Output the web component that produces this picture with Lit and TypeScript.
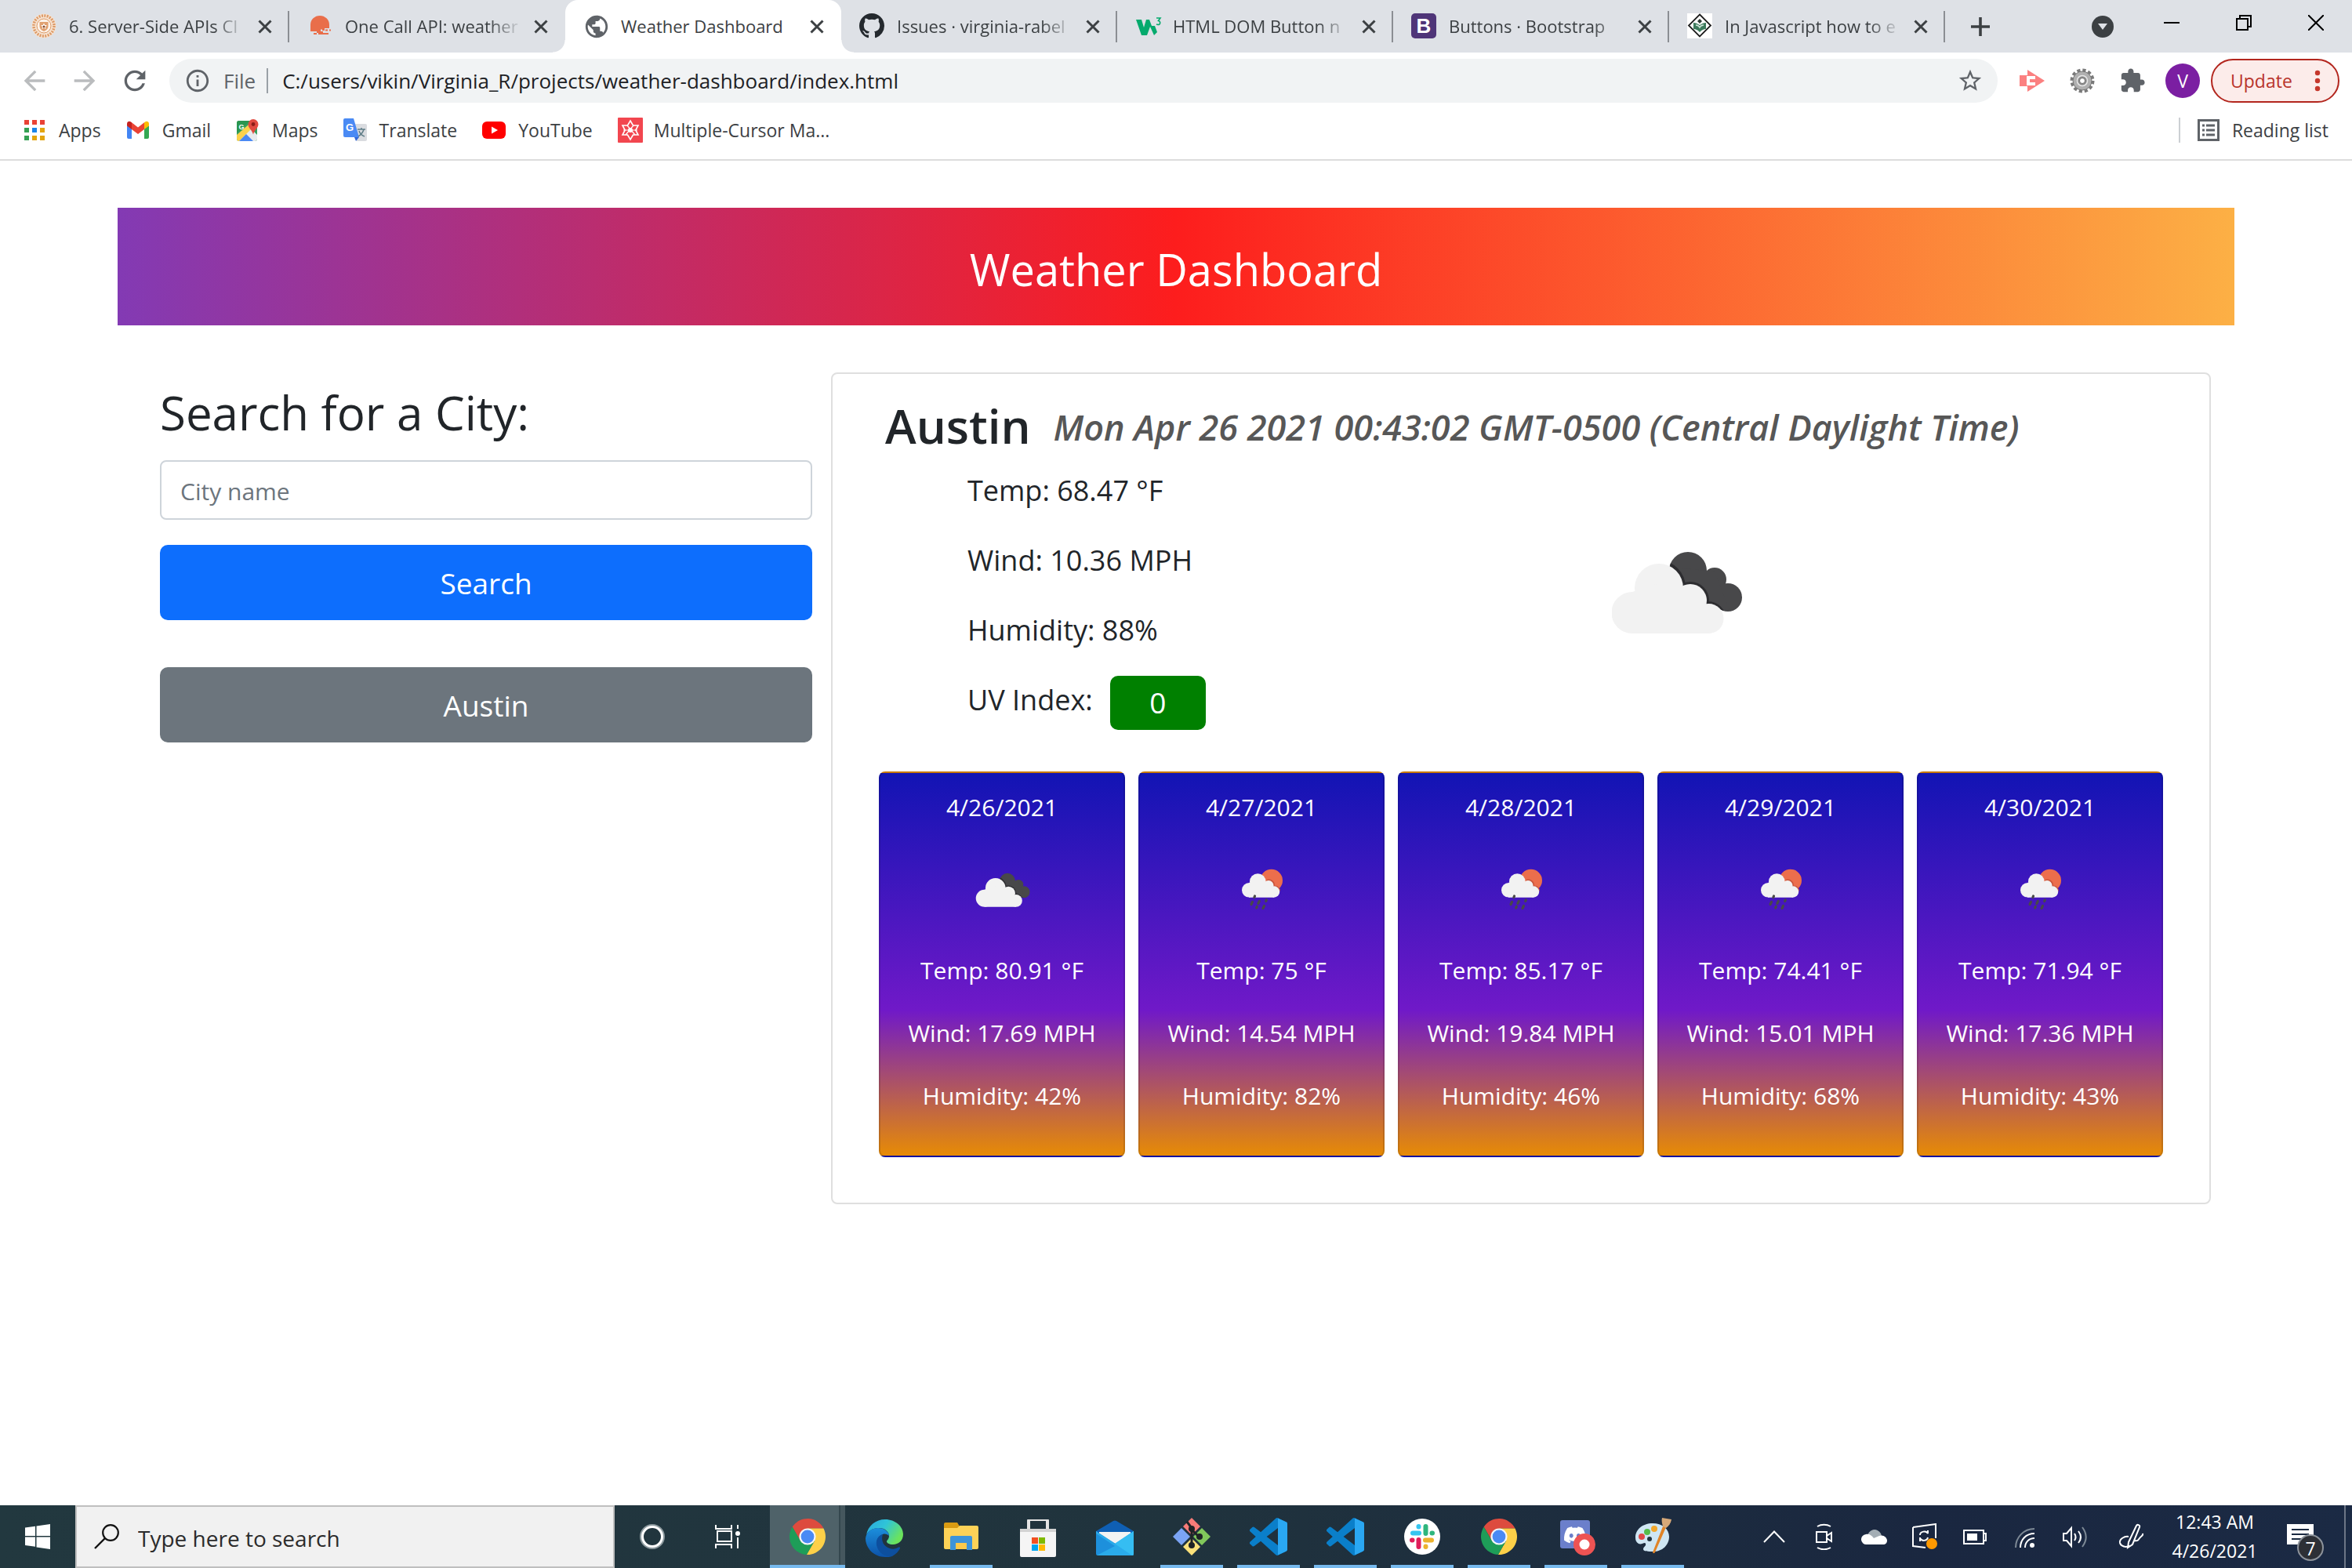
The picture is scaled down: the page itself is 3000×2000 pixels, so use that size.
import { LitElement, html, css, svg, nothing } from "lit";
import { customElement, state } from "lit/decorators.js";
import { classMap } from "lit/directives/class-map.js";

const icon = (w: number, h: number, box: string, body: unknown) =>
  html`<svg width=${w} height=${h} viewBox=${box} aria-hidden="true">${body}</svg>`;

const glyph = (d: string, size: number, fill = "#5f6368") =>
  icon(size, size, "0 0 24 24", svg`<path d=${d} fill=${fill}></path>`);

const GLOBE =
  "M12 2C6.48 2 2 6.48 2 12s4.48 10 10 10 10-4.48 10-10S17.52 2 12 2zm-1 17.93c-3.95-.49-7-3.85-7-7.93 0-.62.08-1.21.21-1.79L9 15v1c0 1.1.9 2 2 2v1.93zm6.9-2.54c-.26-.81-1-1.39-1.9-1.39h-1v-3c0-.55-.45-1-1-1H8v-2h2c.55 0 1-.45 1-1V7h2c1.1 0 2-.9 2-2v-.41c2.93 1.19 5 4.06 5 7.41 0 2.08-.8 3.97-2.1 5.39z";
const BACK = "M20 11H7.83l5.59-5.59L12 4l-8 8 8 8 1.41-1.41L7.83 13H20v-2z";
const FORWARD = "M4 13h12.17l-5.59 5.59L12 20l8-8-8-8-1.41 1.41L16.17 11H4v2z";
const RELOAD =
  "M17.65 6.35C16.2 4.9 14.21 4 12 4c-4.42 0-7.99 3.58-7.99 8s3.57 8 7.99 8c3.73 0 6.84-2.55 7.73-6h-2.08c-.82 2.33-3.04 4-5.65 4-3.31 0-6-2.69-6-6s2.69-6 6-6c1.66 0 3.14.69 4.22 1.78L13 11h7V4l-2.35 2.35z";
const INFO =
  "M11 7h2v2h-2zm0 4h2v6h-2zm1-9C6.48 2 2 6.48 2 12s4.48 10 10 10 10-4.48 10-10S17.52 2 12 2zm0 18c-4.41 0-8-3.59-8-8s3.59-8 8-8 8 3.59 8 8-3.59 8-8 8z";
const STAR =
  "M22 9.24l-7.19-.62L12 2 9.19 8.63 2 9.24l5.46 4.73L5.82 21 12 17.27 18.18 21l-1.63-7.03L22 9.24zM12 15.4l-3.76 2.27 1-4.28-3.32-2.88 4.38-.38L12 6.1l1.71 4.04 4.38.38-3.32 2.88 1 4.28L12 15.4z";
const PUZZLE =
  "M20.5 11H19V7c0-1.1-.9-2-2-2h-4V3.5C13 2.12 11.88 1 10.5 1S8 2.12 8 3.5V5H4c-1.1 0-1.99.9-1.99 2v3.8H3.5c1.49 0 2.7 1.21 2.7 2.7s-1.21 2.7-2.7 2.7H2V20c0 1.1.9 2 2 2h3.8v-1.5c0-1.49 1.21-2.7 2.7-2.7 1.49 0 2.7 1.21 2.7 2.7V22H17c1.1 0 2-.9 2-2v-4h1.5c1.38 0 2.5-1.12 2.5-2.5S21.88 11 20.5 11z";
const OCTOCAT =
  "M8 0C3.58 0 0 3.58 0 8c0 3.54 2.29 6.53 5.47 7.59.4.07.55-.17.55-.38 0-.19-.01-.82-.01-1.49-2.01.37-2.53-.49-2.69-.94-.09-.23-.48-.94-.82-1.13-.28-.15-.68-.52-.01-.53.63-.01 1.08.58 1.23.82.72 1.21 1.87.87 2.33.66.07-.52.28-.87.51-1.07-1.78-.2-3.64-.89-3.64-3.95 0-.87.31-1.59.82-2.15-.08-.2-.36-1.02.08-2.12 0 0 .67-.21 2.2.82.64-.18 1.32-.27 2-.27s1.36.09 2 .27c1.53-1.04 2.2-.82 2.2-.82.44 1.1.16 1.92.08 2.12.51.56.82 1.27.82 2.15 0 3.07-1.87 3.75-3.65 3.95.29.25.54.73.54 1.48 0 1.07-.01 1.93-.01 2.2 0 .21.15.46.55.38A8.01 8.01 0 0 0 16 8c0-4.42-3.58-8-8-8z";
const DISCORD =
  "M20.317 4.37a19.79 19.79 0 0 0-4.885-1.515.074.074 0 0 0-.079.037c-.21.375-.444.864-.608 1.25a18.27 18.27 0 0 0-5.487 0 12.64 12.64 0 0 0-.617-1.25.077.077 0 0 0-.079-.037A19.74 19.74 0 0 0 3.677 4.37a.07.07 0 0 0-.032.027C.533 9.046-.32 13.58.099 18.057a.082.082 0 0 0 .031.057 19.9 19.9 0 0 0 5.993 3.03.078.078 0 0 0 .084-.028c.462-.63.874-1.295 1.226-1.994a.076.076 0 0 0-.041-.106 13.1 13.1 0 0 1-1.872-.892.077.077 0 0 1-.008-.128c.126-.094.252-.192.372-.291a.074.074 0 0 1 .077-.01c3.928 1.793 8.18 1.793 12.062 0a.074.074 0 0 1 .078.009c.12.099.246.198.373.292a.077.077 0 0 1-.006.127 12.3 12.3 0 0 1-1.873.892.077.077 0 0 0-.041.107c.36.698.772 1.362 1.225 1.993a.076.076 0 0 0 .084.028 19.84 19.84 0 0 0 6.002-3.03.077.077 0 0 0 .032-.054c.5-5.177-.838-9.674-3.549-13.66a.06.06 0 0 0-.031-.028zM8.02 15.33c-1.183 0-2.157-1.085-2.157-2.419s.956-2.419 2.157-2.419c1.21 0 2.176 1.096 2.157 2.42 0 1.333-.956 2.418-2.157 2.418zm7.975 0c-1.183 0-2.157-1.085-2.157-2.419s.955-2.419 2.157-2.419c1.21 0 2.176 1.096 2.157 2.42 0 1.333-.946 2.418-2.157 2.418z";
const VSCODE =
  "M96.46 10.8 75.86.9a6.2 6.2 0 0 0-7.1 1.2L29.4 38 12.2 25a4.2 4.2 0 0 0-5.3.2l-5.5 5a4.2 4.2 0 0 0 0 6.2L16.2 50 1.4 63.6a4.2 4.2 0 0 0 0 6.2l5.5 5a4.2 4.2 0 0 0 5.3.2l17.2-13 39.4 36a6.2 6.2 0 0 0 7.1 1.2l20.6-9.9A6.3 6.3 0 0 0 100 83.6V16.4a6.3 6.3 0 0 0-3.5-5.6zM75 72.7 45.1 50 75 27.3z";

/* Tab favicons, 32px */
const favicons = {
  seal: () =>
    icon(32, 32, "0 0 32 32", svg`
      <circle cx="16" cy="16" r="15.5" fill="#f6e3d2"></circle>
      <circle cx="16" cy="16" r="13" fill="none" stroke="#dd9a67" stroke-width="3.5" stroke-dasharray="2 1.4"></circle>
      <circle cx="16" cy="16" r="9" fill="#fdf3ea" stroke="#dd9a67" stroke-width="1"></circle>
      <path d="M10.500 11h11v5c0 4-3 6-5.500 7-2.500-1-5.500-3-5.500-7z" fill="#e0a070"></path>
      <path d="M16 12.500l1.200 2.500 2.700.3-2 1.900.5 2.700-2.400-1.300-2.400 1.300.5-2.700-2-1.900 2.700-.3z" fill="#fff"></path>
      <circle cx="16" cy="17" r="1.500" fill="#8a4b2b"></circle>`),
  sun: () =>
    icon(32, 32, "0 0 32 32", svg`
      <path d="M4 21V14.500A12 11.500 0 0 1 28 14.500V19h-6v3h-3v-1.500h-2V23h3v2h7v2H14v-2h-2v-2H4z" fill="#e96e4a"></path>
      <path d="M23 20.500h3v2h-3zM28 20.500h2v2h-2zM8 25h4v2H8z" fill="#e96e4a"></path>`),
  globe: () => glyph(GLOBE, 34),
  github: () => icon(32, 32, "0 0 16 16", svg`<path d=${OCTOCAT} fill="#24292e"></path>`),
  w3: () =>
    icon(34, 32, "0 0 34 32", svg`
      <path d="M1 8h7l3 10 3-10h4l3 8 4 0 3 8-4 4-5-11-4 11h-4L8 28z" fill="#04aa6d"></path>
      <path d="M27 6h5l-2.500 3.500c3 .5 3 5-.5 5l-2-.6" fill="none" stroke="#04aa6d" stroke-width="1.600"></path>`),
  bootstrap: () =>
    icon(32, 32, "0 0 32 32", svg`
      <rect width="32" height="32" rx="5" fill="#4f3578"></rect>
      <text x="16" y="25" text-anchor="middle" font-family="Liberation Sans" font-weight="700" font-size="26" fill="#fff">B</text>`),
  diamond: () =>
    icon(32, 32, "0 0 32 32", svg`
      <rect width="32" height="32" fill="#fff"></rect>
      <path d="M16 1.500 30 15.500 16 29.500 2 15.500z" fill="#fff" stroke="#1d1d1d" stroke-width="1.800"></path>
      <path d="M16 7l3 3-3 3-3-3z" fill="#2b3a33"></path>
      <path d="M8 12c3 0 5 1 8 3 3-2 5-3 8-3v8c-3 0-5 1-8 4-3-3-5-4-8-4z" fill="#3c7a5c"></path>
      <path d="M11 15c2 0 4 1 5 3 1-2 3-3 5-3" stroke="#cfe5d9" stroke-width="1.500" fill="none"></path>`),
};

const bookmarkIcons = {
  apps: () =>
    icon(30, 30, "0 0 30 30", svg`${[0, 1, 2].flatMap((r) =>
      [0, 1, 2].map((c) => {
        const colors = ["#e94235", "#e94235", "#e94235", "#34a053", "#1a84e8", "#e3a50f", "#34a053", "#e3a50f", "#e3a50f"];
        return svg`<rect x=${2 + c * 10} y=${2 + r * 10} width="6" height="6" fill=${colors[r * 3 + c]}></rect>`;
      })
    )}`),
  gmail: () =>
    icon(30, 30, "0 0 30 30", svg`
      <path d="M1 9v15a2 2 0 0 0 2 2h4V13z" fill="#4285f4"></path>
      <path d="M29 9v15a2 2 0 0 1-2 2h-4V13z" fill="#34a853"></path>
      <path d="M1 7c0-3 3-4 5-2.500l1 .8V14L1 9.500z" fill="#c5221f"></path>
      <path d="M29 7c0-3-3-4-5-2.500l-1 .8V14l6-4.500z" fill="#fbbc04"></path>
      <path d="M7 5.300 15 11.500l8-6.200V14l-8 6-8-6z" fill="#ea4335"></path>`),
  maps: () =>
    icon(30, 30, "0 0 30 30", svg`
      <clipPath id="map-tile"><rect x="1" y="3" width="26" height="26" rx="3"></rect></clipPath>
      <g clip-path="url(#map-tile)">
        <rect x="1" y="3" width="26" height="26" fill="#34a05f"></rect>
        <path d="M1 29 18 12l9 9v8z" fill="#e8eaed"></path>
        <path d="M1 21 16 8l4 5L4 29H1z" fill="#fbd24c"></path>
        <path d="M4 29l9-9 9 9z" fill="#4a89f3"></path>
        <path d="M1 3h17L1 19z" fill="#2a9650"></path>
      </g>
      <text x="7" y="14" text-anchor="middle" font-family="Liberation Sans" font-weight="700" font-size="9" fill="#fff">G</text>
      <path d="M22 1a6.500 6.500 0 0 1 6.500 6.500c0 5-5 7-6.500 13-1.500-6-6.500-8-6.500-13A6.500 6.500 0 0 1 22 1z" fill="#e04a3f"></path>
      <circle cx="22" cy="7.500" r="2.400" fill="#8c1d18"></circle>`),
  translate: () =>
    icon(30, 30, "0 0 30 30", svg`
      <path d="M13 7h15a2 2 0 0 1 2 2v18a2 2 0 0 1-2 2H17z" fill="#dadce0"></path>
      <path d="M2 0h11l7 24H2a2 2 0 0 1-2-2V2a2 2 0 0 1 2-2z" fill="#4a8af4"></path>
      <path d="M14 24h6l-4 5z" fill="#3367d6"></path>
      <path d="M18 14h10M23 12v2M26 14c-1 4-4 7-7 9M20 16c1 3 4 6 7 7" stroke="#5f7d87" stroke-width="1.500" fill="none"></path>
      <text x="8" y="16" text-anchor="middle" font-family="Liberation Sans" font-weight="700" font-size="13" fill="#fff">G</text>`),
  youtube: () =>
    icon(30, 30, "0 0 30 30", svg`
      <rect x="0" y="4" width="30" height="22" rx="6" fill="#f00"></rect>
      <path d="M12 10.500 20 15l-8 4.500z" fill="#fff"></path>`),
  star: () =>
    icon(32, 32, "0 0 32 32", svg`
      <rect width="32" height="32" rx="1" fill="#f2464f"></rect>
      <path d="M16 4 19.500 10H26l-3.200 6 3.200 6h-6.500L16 28l-3.500-6H6l3.200-6L6 10h6.500z" fill="none" stroke="#fff" stroke-width="1.600"></path>
      <path d="M12 10l10 12M20 10 10 22M7 16h18" stroke="#fff" stroke-width="1.200"></path>
      <circle cx="16" cy="16" r="3" fill="#fff"></circle>`),
};

const chromeLogo = () =>
  icon(46, 46, "-23 -23 46 46", svg`
    <path d="M-9.090 5.250-19.320-12.470A23 23 0 0 1 20.460-10.500H0z" fill="#dd4b3e"></path>
    <path d="M0-10.500H20.460A23 23 0 0 1-1.140 22.970L9.090 5.250z" fill="#fdd048"></path>
    <path d="M9.090 5.250-1.140 22.970A23 23 0 0 1-19.320-12.470L-9.090 5.250z" fill="#1e9d58"></path>
    <circle r="10.600" fill="#f4f6f8"></circle>
    <circle r="8.400" fill="#4a8af4"></circle>`);

const appIcons = {
  chrome: chromeLogo,
  edge: () =>
    icon(48, 48, "0 0 48 48", svg`
      <defs>
        <linearGradient id="edge-top" x1="0" y1="0" x2="1" y2="0.500">
          <stop offset="0" stop-color="#2aa6dd"></stop><stop offset="0.500" stop-color="#2fc4d8"></stop><stop offset="1" stop-color="#6be35c"></stop>
        </linearGradient>
        <linearGradient id="edge-low" x1="0" y1="0" x2="0" y2="1">
          <stop offset="0" stop-color="#1c8fdc"></stop><stop offset="1" stop-color="#0c52a8"></stop>
        </linearGradient>
      </defs>
      <path d="M1 20C3 8 13 0 25 0c13 0 23 9 23 19 0 8-6 13-13 13-5 0-8-2-8-4 0-1 3-3 3-7 0-5-5-10-13-10C9 11 3 15 1 20z" fill="url(#edge-top)"></path>
      <path d="M0 24C1 16 8 11 16 11c8 0 14 5 14 10-2-2-5-3-8-2-6 2-9 8-7 15 2 8 10 13 19 13-3 1-6 1-9 1C11 48 0 37 0 24z" fill="url(#edge-low)"></path>
      <path d="M22 19c-7 2-10 9-7 17 3 8 11 12 19 11 5-3 8-6 10-10 0-2-1-2-3-1-3 2-7 2-10 1-7-2-12-9-9-18z" fill="#0d4f9e"></path>`),
  explorer: () =>
    icon(44, 40, "0 0 44 40", svg`
      <path d="M0 4a2 2 0 0 1 2-2h15l3 5v6H0z" fill="#d99b12"></path>
      <path d="M20 6h22a2 2 0 0 1 2 2v26a2 2 0 0 1-2 2H2a2 2 0 0 1-2-2V9h17z" fill="#fdd257"></path>
      <path d="M8 21a2 2 0 0 1 2-2h24a2 2 0 0 1 2 2v16h-7v-9H15v9H8z" fill="#3d94d9"></path>
      <path d="M15 28h14v8H15z" fill="#fbc94a"></path>`),
  store: () =>
    icon(48, 48, "0 0 48 48", svg`
      <path d="M12 14V2a2 2 0 0 1 2-2h20a2 2 0 0 1 2 2v12" fill="none" stroke="#e4e4e4" stroke-width="4"></path>
      <path d="M1 12h46v34a2 2 0 0 1-2 2H3a2 2 0 0 1-2-2z" fill="#f5f5f5"></path>
      <path d="M1 12h46v4H1z" fill="#d3d3d3"></path>
      <path d="M16 23h8v8h-8z" fill="#f25022"></path><path d="M25 23h8v8h-8z" fill="#7fba00"></path>
      <path d="M16 32h8v8h-8z" fill="#00a4ef"></path><path d="M25 32h8v8h-8z" fill="#ffb900"></path>`),
  mail: () =>
    icon(48, 46, "0 0 48 46", svg`
      <path d="M0 14 22 1a4 4 0 0 1 4 0l22 13v6H0z" fill="#0f5fb4"></path>
      <path d="M4 15h40v18H4z" fill="#f3f3f3"></path>
      <path d="M0 14l48 31H2a2 2 0 0 1-2-2z" fill="#1d90dc"></path>
      <path d="M48 14 24 30 0 14v3l24 16-23 12h45a2 2 0 0 0 2-2z" fill="#2aabea"></path>
      <path d="M48 14v29a2 2 0 0 1-2 2L24 30z" fill="#35bdf2"></path>`),
  git: () =>
    icon(48, 48, "0 0 48 48", svg`
      <path d="M24 0 35 11 24 22 13 11z" fill="#f87b78"></path>
      <path d="M37 13 48 24 37 35 26 24z" fill="#81c85b"></path>
      <path d="M11 13 22 24 11 35 0 24z" fill="#7ba4f4"></path>
      <path d="M24 26 35 37 24 48 13 37z" fill="#fbe17a"></path>
      <path d="M18 5l6 8v23M24 15l9 9" stroke="#1f2326" stroke-width="3" fill="none"></path>
      <circle cx="24" cy="14" r="4" fill="#1f2326"></circle><circle cx="34" cy="24" r="4" fill="#1f2326"></circle>
      <circle cx="24" cy="35" r="4" fill="#1f2326"></circle>`),
  vscode: () =>
    icon(48, 48, "0 0 100 100", svg`
      <path d=${VSCODE} fill="#0a7fca"></path>
      <path d="M75 27.300V1l21.500 9.800A6.300 6.300 0 0 1 100 16.400v67.200a6.300 6.300 0 0 1-3.500 5.600L75 99z" fill="#2aa7f2"></path>`),
  slack: () =>
    icon(46, 46, "0 0 46 46", svg`
      <circle cx="23" cy="23" r="23" fill="#fff"></circle>
      <g stroke-width="6" stroke-linecap="round">
        <path d="M11 18.500h8" stroke="#36c5f0"></path><path d="M18.500 10v.5" stroke="#36c5f0"></path>
        <path d="M27.500 10v9" stroke="#2eb67d"></path><path d="M36 18.500h-.5" stroke="#2eb67d"></path>
        <path d="M35 27.500h-8" stroke="#ecb22e"></path><path d="M27.500 36v-.5" stroke="#ecb22e"></path>
        <path d="M18.500 36v-9" stroke="#e01e5a"></path><path d="M10 27.500h.5" stroke="#e01e5a"></path>
      </g>`),
  discord: () =>
    icon(52, 52, "0 0 52 52", svg`
      <rect x="6" y="5" width="38" height="36" rx="3" fill="#6b7fcb"></rect>
      <path d=${DISCORD} transform="translate(11 10) scale(1.150)" fill="#fff"></path>
      <circle cx="37" cy="36" r="14" fill="#ee5353"></circle>
      <circle cx="37" cy="36" r="6.500" fill="#fff"></circle>`),
  paint: () =>
    icon(48, 48, "0 0 48 48", svg`
      <path d="M24 7c12 0 21 7 21 17 0 11-9 19-20 19-7 0-13 0-13-3 0-3 4-4 3-7-1-3-5 2-9 0-3-2-4-4-4-8C2 15 11 7 24 7z" fill="#cfe6f3"></path>
      <circle cx="20" cy="27" r="3" fill="#22333d"></circle>
      <circle cx="10" cy="24" r="4" fill="#e04848"></circle>
      <circle cx="17" cy="18" r="4" fill="#57bb4a"></circle>
      <circle cx="26" cy="14" r="4" fill="#f2a72b"></circle>
      <path d="M37 11l4 1-14 32c-1 2-3 1-3 0z" fill="#e08427"></path>
      <path d="M36 0l12 2c-1 5-3 8-7 11l-4-2c-1-4-2-8-1-11z" fill="#d6a878"></path>`),
};

/* Tray glyphs, 34px canvas */
const line = (d: string) =>
  svg`<path d=${d} fill="none" stroke="#fff" stroke-width="2"></path>`;
const tray = {
  chevron: () => icon(34, 34, "0 0 34 34", line("M4 24 17 10.500 30 24")),
  camera: () => icon(34, 34, "0 0 34 34", svg`${line("M7 11h13v13H7zM20 16l6-4v11l-6-4M8 4c5-3 12-3 17 0M8 31c5 3 12 3 17 0")}`),
  cloud: () =>
    icon(34, 34, "0 0 34 34", svg`
      <path d="M8 17A9 9 0 0 1 25 13l2 6H8z" fill="#a3adb4"></path>
      <path d="M7 27a6.500 6.500 0 0 1-1-13c4-1 7 1 10 5l7-3c5-2 10 2 10 6 0 3-2 5-5 5z" fill="#fff"></path>`),
  sync: () =>
    icon(34, 34, "0 0 34 34", svg`
      ${line("M2 5 31 1v18M2 5v24l16 2")}
      ${line("M11 15c0-5 8-6 10-2v-4M11 18v5M21 18c-1 5-8 5-10 1")}
      <circle cx="26" cy="26" r="7" fill="#ff9900"></circle>`),
  battery: () =>
    icon(34, 34, "0 0 34 34", svg`${line("M3 9h25v17H3zM28 13h3v9h-3")}<path d="M7 13h13v9H7z" fill="#fff"></path>`),
  wifi: () =>
    icon(34, 34, "0 0 34 34", svg`
      <path d="M5 31C5 18 15 7 29 7" fill="none" stroke="#7d8995" stroke-width="2"></path>
      ${line("M11 31c0-10 7-18 18-18M17 31c0-7 5-12 12-12")}
      <circle cx="26" cy="28" r="3" fill="#fff"></circle>`),
  volume: () =>
    icon(34, 34, "0 0 34 34", svg`
      ${line("M2 13h4l6-7v23l-6-7H2zM16 13c2 3 2 6 0 9M21 10c4 5 4 10 0 15")}
      <path d="M26 5c6 8 6 17 0 25" fill="none" stroke="#7d8995" stroke-width="2"></path>`),
  pen: () => icon(34, 34, "0 0 34 34", line("M14 24 24 3c1-2 5-1 4 2L19 27l-6 4zM14 17c-5-1-12 3-11 8 1 4 8 7 12 3M22 22c3 1 4 0 6-3s5-3 4-6")),
};

const backCloud = svg`
  <circle cx="97" cy="24" r="24"></circle><circle cx="131" cy="35" r="15"></circle>
  <circle cx="148" cy="58" r="18"></circle><path d="M80 20 131 25 150 74 95 70z"></path>`;

/* The shadow of the front cloud is clipped to the dark cloud behind it. */
const cloudsArt = (w: number, h: number, box: string, id: string) =>
  icon(w, h, box, svg`
    <clipPath id=${id}>${backCloud}</clipPath>
    <g fill="#48484a">${backCloud}</g>
    <g fill="#2d2d30" clip-path=${`url(#${id})`}>
      <circle cx="60" cy="45" r="34"></circle><circle cx="100" cy="62" r="24"></circle><circle cx="123" cy="85" r="22"></circle>
    </g>
    <g fill="#f2f2f2">
      <circle cx="26" cy="77.500" r="26.500"></circle><circle cx="60" cy="46" r="31"></circle>
      <circle cx="100" cy="62" r="21"></circle><circle cx="123.500" cy="85" r="19"></circle>
      <path d="M26 51 60 40 100 62l23.500 23.500V104H26z"></path>
    </g>`);

const rainArt = () =>
  icon(100, 100, "0 0 100 100", svg`
    <circle cx="62.700" cy="39" r="14.300" fill="#ec6e4c"></circle>
    <g fill="#c9553c">
      <path d="M56 38.500a7.500 7.500 0 0 1 11 7c5 0 7 4 7 7l-12-4z"></path>
    </g>
    <g fill="#f2f2f2">
      <circle cx="34.300" cy="51.300" r="9.300"></circle><circle cx="45.300" cy="40.500" r="10.300"></circle>
      <circle cx="59" cy="45.500" r="6.500"></circle><circle cx="66" cy="53.500" r="7.200"></circle>
      <path d="M34 42 45 38l14 7 7 8v7.700H34z"></path>
    </g>
    <g stroke="#48484a" stroke-width="3.200" stroke-linecap="round">
      <path d="M41.500 59l-.6 1.500M38.500 66.500 37 69.500M47.300 65.500 45.800 68.500M56.300 64l-.6 1.500M44.300 72.500l-.6 1.500M53.500 71.500 52 74.500"></path>
    </g>`);

interface Day {
  date: string;
  sky: "clouds" | "rain";
  temp: string;
  wind: string;
  humidity: string;
}

const DAYS: Day[] = [
  { date: "4/26/2021", sky: "clouds", temp: "80.91", wind: "17.69", humidity: "42" },
  { date: "4/27/2021", sky: "rain", temp: "75", wind: "14.54", humidity: "82" },
  { date: "4/28/2021", sky: "rain", temp: "85.17", wind: "19.84", humidity: "46" },
  { date: "4/29/2021", sky: "rain", temp: "74.41", wind: "15.01", humidity: "68" },
  { date: "4/30/2021", sky: "rain", temp: "71.94", wind: "17.36", humidity: "43" },
];

const reset = css`
  *, *::before, *::after { box-sizing: border-box; }
  button, input { font: inherit; color: inherit; margin: 0; }
  button { border: 0; padding: 0; background: none; }
  a { color: inherit; text-decoration: none; }
  h1, h2, h3, p, ul, figure { margin: 0; padding: 0; font-weight: 400; font-size: inherit; }
  svg { display: block; flex: none; }
`;

@customElement("browser-chrome")
class BrowserChrome extends LitElement {
  @state() private active = 2;

  static styles = [reset, css`
    :host { display: block; font-size: 23px; line-height: 32px; color: #3c4043; background: #fff; border-bottom: 2px solid #dcdcdc; }
    .strip { display: flex; height: 67px; padding-left: 17px; background: #dee1e6; font-size: 22px; }
    .tab { position: relative; display: flex; align-items: center; width: 352px; padding-left: 23px; }
    .tab .pick { display: flex; align-items: center; gap: 16px; width: 273px; padding-bottom: 2px; text-align: left; }
    .fav { display: grid; place-items: center; flex: none; width: 32px; height: 32px; }
    .name { flex: 1; overflow: hidden; white-space: nowrap; mask-image: linear-gradient(90deg, #000 184px, transparent 226px); }
    .tab.active .name { mask-image: none; }
    .close { display: grid; place-items: center; width: 50px; height: 40px; }
    .rule { width: 2px; height: 40px; margin-left: auto; background: #8b8e93; }
    .tab.active { background: #fff; border-radius: 16px 16px 0 0; }
    .tab.active::before, .tab.active::after { content: ""; position: absolute; bottom: 0; width: 16px; height: 16px; }
    .tab.active::before { left: -16px; background: radial-gradient(circle at 0 0, transparent 15px, #fff 16px); }
    .tab.active::after { right: -16px; background: radial-gradient(circle at 100% 0, transparent 15px, #fff 16px); }
    .plus { display: grid; place-items: center; width: 90px; }
    .window { display: flex; margin-left: auto; }
    .window button { display: grid; place-items: center; width: 92px; padding-bottom: 10px; }
    .window .search-tabs { width: 84px; padding: 0; }
    .toolbar { display: flex; align-items: center; padding: 8px 16px 0 12px; }
    .tool { display: grid; place-items: center; width: 64px; height: 56px; }
    .omnibox { display: flex; align-items: center; flex: 1; height: 56px; margin: 0 12px; padding: 0 18px 0 19px; border-radius: 28px; background: #f1f3f4; font-size: 26px; }
    .scheme { padding: 0 14px 0 16px; color: #5f6368; }
    .bar { width: 2px; height: 32px; background: #9aa0a6; }
    .url { flex: 1; height: 40px; padding: 0; margin-left: 18px; border: 0; outline: 0; background: none; color: #202124; }
    .avatar { display: grid; place-items: center; width: 44px; height: 44px; border-radius: 50%; background: #7b1fa2; color: #fff; }
    .update { display: flex; align-items: center; justify-content: space-between; width: 164px; height: 56px; margin-left: 4px; padding: 0 22px 0 23px; border: 2px solid #b3261e; border-radius: 28px; background: #fcecea; color: #b9342b; }
    .bookmarks { display: flex; align-items: center; height: 72px; padding: 0 30px 2px 29px; gap: 32px; }
    .bookmark { display: flex; align-items: center; gap: 16px; white-space: nowrap; }
    .mark { display: grid; place-items: center; width: 30px; height: 32px; }
    .reading { margin-left: auto; padding-left: 22px; border-left: 2px solid #cccfd3; }
  `];

  private tabs = [
    { icon: favicons.seal, name: "6. Server-Side APIs Cl" },
    { icon: favicons.sun, name: "One Call API: weather" },
    { icon: favicons.globe, name: "Weather Dashboard" },
    { icon: favicons.github, name: "Issues · virginia-rabel" },
    { icon: favicons.w3, name: "HTML DOM Button n" },
    { icon: favicons.bootstrap, name: "Buttons · Bootstrap" },
    { icon: favicons.diamond, name: "In Javascript how to e" },
  ];

  private marks = [
    { icon: bookmarkIcons.apps, name: "Apps" },
    { icon: bookmarkIcons.gmail, name: "Gmail" },
    { icon: bookmarkIcons.maps, name: "Maps" },
    { icon: bookmarkIcons.translate, name: "Translate" },
    { icon: bookmarkIcons.youtube, name: "YouTube" },
    { icon: bookmarkIcons.star, name: "Multiple-Cursor Ma..." },
  ];

  render() {
    const stroke = (d: string, w = 3, color = "#3c4043", size = 20) =>
      icon(size, size, "0 0 20 20", svg`<path d=${d} fill="none" stroke=${color} stroke-width=${w}></path>`);
    return html`
      <div class="strip">
        ${this.tabs.map((t, i) => html`
          <div class=${classMap({ tab: true, active: i === this.active })}>
            <button class="pick" @click=${() => (this.active = i)}>
              <span class="fav">${t.icon()}</span><span class="name">${t.name}</span>
            </button>
            <button class="close" aria-label="Close tab">${stroke("M2.500 2.500l15 15M17.500 2.500l-15 15", 3)}</button>
            ${i === this.active || i + 1 === this.active ? nothing : html`<span class="rule"></span>`}
          </div>`)}
        <button class="plus" aria-label="New tab">${stroke("M10 0v20M0 10h20", 3, "#3c4043", 24)}</button>
        <div class="window">
          <button class="search-tabs" aria-label="Search tabs">
            ${icon(28, 28, "0 0 28 28", svg`<circle cx="14" cy="14" r="14" fill="#3c4043"></circle><path d="M8 10h12l-6 8z" fill="#dee1e6"></path>`)}
          </button>
          <button aria-label="Minimize">${stroke("M0 10h20", 2, "#000")}</button>
          <button aria-label="Restore">${stroke("M1 5h14v14H1zM5 5V1h14v14h-4", 2, "#000")}</button>
          <button aria-label="Close">${stroke("M0 0l20 20M20 0 0 20", 2, "#000")}</button>
        </div>
      </div>
      <div class="toolbar">
        <button class="tool" aria-label="Back">${glyph(BACK, 40, "#babcbe")}</button>
        <button class="tool" aria-label="Forward">${glyph(FORWARD, 40, "#babcbe")}</button>
        <button class="tool" aria-label="Reload">${glyph(RELOAD, 40)}</button>
        <div class="omnibox">
          ${glyph(INFO, 34)}
          <span class="scheme">File</span><span class="bar"></span>
          <input class="url" aria-label="Address" .value=${"C:/users/vikin/Virginia_R/projects/weather-dashboard/index.html"} />
          <button aria-label="Bookmark this page">${glyph(STAR, 34)}</button>
        </div>
        <button class="tool" aria-label="Recorder">
          ${icon(32, 32, "0 0 32 32", svg`
            <path d="M0 9h10v14H0z" fill="#fb8080"></path><path d="M10 2 32 16 10 30z" fill="#fb8080"></path>
            <path d="M20 12h-9v8h9" fill="none" stroke="#fff" stroke-width="4"></path>`)}
        </button>
        <button class="tool" aria-label="Settings extension">
          ${icon(32, 32, "-16 -16 32 32", svg`
            <circle r="13" fill="none" stroke="#7a7a7a" stroke-width="5" stroke-dasharray="4 2.800"></circle>
            <circle r="12" fill="#b0b0b0" stroke="#757575"></circle>
            <circle r="6.500" fill="#8c8c8c" stroke="#e8e8e8" stroke-width="1.500"></circle>
            <circle r="3.500" fill="#fff" stroke="#6d6d6d"></circle>`)}
        </button>
        <button class="tool" aria-label="Extensions">${glyph(PUZZLE, 34)}</button>
        <button class="tool" aria-label="Profile"><span class="avatar">V</span></button>
        <button class="update">Update
          ${icon(8, 28, "0 0 8 28", svg`<g fill="#c5372c"><circle cx="4" cy="4" r="3.200"></circle><circle cx="4" cy="14" r="3.200"></circle><circle cx="4" cy="24" r="3.200"></circle></g>`)}
        </button>
      </div>
      <nav class="bookmarks">
        ${this.marks.map((m) => html`<a class="bookmark" href="#"><span class="mark">${m.icon()}</span>${m.name}</a>`)}
        <a class="bookmark reading" href="#">
          ${icon(28, 28, "0 0 28 28", svg`
            <path d="M1.500 1.500h25v25h-25z" fill="none" stroke="#5f6368" stroke-width="3"></path>
            <path d="M6 8h3M11 8h11M6 14h3M11 14h11M6 20h3M11 20h11" stroke="#5f6368" stroke-width="3"></path>`)}
          Reading list
        </a>
      </nav>`;
  }
}

@customElement("weather-page")
class WeatherPage extends LitElement {
  static styles = [reset, css`
    :host { display: block; font-size: 30px; line-height: 48px; color: #212529; }
    .banner { margin: 60px 5% 0; padding: 28px 0 22px; background: linear-gradient(90deg, #833ab4 0%, #fd1d1d 50%, #fcb045 100%); color: #fff; text-align: center; font-size: 56px; line-height: 100px; }
    .columns { display: grid; grid-template-columns: 1fr 2fr; align-items: start; padding: 60px 6% 0; }
    .finder { padding: 12px 24px 0; }
    .finder h2 { font-size: 60px; line-height: 78px; }
    .city { display: block; width: 100%; height: 76px; margin-top: 22px; padding: 2px 24px 0; border: 2px solid #ced4da; border-radius: 8px; background: #fff; outline: 0; }
    .city::placeholder { color: #6c757d; opacity: 1; }
    .wide { display: block; width: 100%; height: 96px; padding-top: 2px; border-radius: 10px; color: #fff; font-size: 37px; }
    .search { margin-top: 32px; background: #0d6efd; }
    .past { margin-top: 60px; background: #6c757d; }
    .card { padding: 28px 59px 58px; border: 2px solid #dfdfdf; border-radius: 8px; }
    .title { display: flex; align-items: center; gap: 29px; padding-left: 8px; font-size: 60px; line-height: 76px; font-weight: 600; white-space: nowrap; }
    .stamp { padding-top: 4px; color: #575757; font-size: 45px; line-height: 72px; font-style: italic; }
    .now { display: grid; grid-template-columns: 1fr 1fr; }
    .readings { padding-left: 113px; font-size: 36px; line-height: 89px; }
    .uv { display: flex; align-items: center; gap: 22px; }
    .badge { width: 122px; height: 69px; margin-top: 8px; border-radius: 10px; background: #008000; color: #fff; font-size: 37px; line-height: 67px; text-align: center; }
    .sky { padding: 123px 0 0 116px; }
    .forecast { display: grid; grid-template-columns: repeat(5, 1fr); gap: 17px; margin-top: 47px; }
    .day { padding: 20px 0 52px; border: 2px solid rgba(0, 0, 0, 0.125); border-radius: 8px; background: linear-gradient(180deg, #1214b4 0%, #7019c8 62%, #e78b05 100%); color: #fff; text-align: center; }
    .day figure { display: grid; justify-content: center; margin: 30px 0; }
    .day p + p { margin-top: 32px; }
  `];

  render() {
    return html`
      <header class="banner"><h1>Weather Dashboard</h1></header>
      <main class="columns">
        <section class="finder">
          <h2><label for="city">Search for a City:</label></h2>
          <input class="city" id="city" type="text" placeholder="City name" />
          <button class="wide search">Search</button>
          <button class="wide past">Austin</button>
        </section>
        <section class="card">
          <div class="title"><span>Austin</span>
            <span class="stamp">Mon Apr 26 2021 00:43:02 GMT-0500 (Central Daylight Time)</span></div>
          <div class="now">
            <div class="readings">
              <p>Temp: 68.47 °F</p>
              <p>Wind: 10.36 MPH</p>
              <p>Humidity: 88%</p>
              <p class="uv">UV Index: <span class="badge">0</span></p>
            </div>
            <figure class="sky">${cloudsArt(167, 104, "0 0 167 104", "now-sky")}</figure>
          </div>
          <div class="forecast">
            ${DAYS.map((d, i) => html`
              <article class="day">
                <h3>${d.date}</h3>
                <figure>${d.sky === "rain" ? rainArt() : cloudsArt(100, 100, "-41 -72 242 242", `sky-${i}`)}</figure>
                <p>Temp: ${d.temp} °F</p>
                <p>Wind: ${d.wind} MPH</p>
                <p>Humidity: ${d.humidity}%</p>
              </article>`)}
          </div>
        </section>
      </main>`;
  }
}

@customElement("task-bar")
class TaskBar extends LitElement {
  static styles = [reset, css`
    :host { display: flex; height: 80px; background: linear-gradient(90deg, #22383f 0%, #20333d 50%, #1a2740 82%, #1b2a44 100%); color: #fff; font-size: 23px; }
    .slot { display: grid; place-items: center; width: 96px; }
    .find { display: flex; align-items: center; width: 688px; gap: 24px; padding-left: 22px; border: 2px solid #bfbfbf; background: #f1f1f1; color: #2b2b2b; font-size: 28px; }
    .find input { flex: 1; height: 60px; padding: 3px 0 0; border: 0; outline: 0; background: none; }
    .find input::placeholder { color: #2b2b2b; opacity: 1; }
    .apps { display: flex; margin-left: 5px; }
    .app { display: flex; flex-direction: column; align-items: center; width: 98px; }
    .pic { display: grid; place-items: center; flex: 1; width: 100%; padding-top: 4px; }
    .line { width: 80px; height: 4px; background: #76b9ed; }
    .app.front { padding-right: 1px; padding-left: 1px; }
    .app.front .pic { background: linear-gradient(90deg, #4f6269 88px, #34474e 88px, #34474e 90px, #45575e 90px); }
    .app.front .line { width: 100%; }
    .tray { display: flex; margin-left: auto; }
    .note { display: grid; place-items: center; width: 64px; }
    .note:last-child { width: 78px; }
    .clock { width: 136px; padding-top: 3px; text-align: center; line-height: 37px; }
    .alerts { position: relative; display: grid; place-items: center; width: 82px; }
    .count { position: absolute; left: 37px; top: 37px; display: grid; place-items: center; width: 34px; height: 34px; border: 2px solid #8d939b; border-radius: 50%; background: #2d3036; }
    .peek { width: 10px; margin-left: 15px; border-left: 2px solid #6c7686; }
  `];

  private apps: { name: string; icon: () => unknown; open: boolean; front?: boolean }[] = [
    { name: "Chrome", icon: appIcons.chrome, open: true, front: true },
    { name: "Edge", icon: appIcons.edge, open: false },
    { name: "File Explorer", icon: appIcons.explorer, open: true },
    { name: "Store", icon: appIcons.store, open: false },
    { name: "Mail", icon: appIcons.mail, open: false },
    { name: "Git Bash", icon: appIcons.git, open: true },
    { name: "Code", icon: appIcons.vscode, open: true },
    { name: "Code workspace", icon: appIcons.vscode, open: true },
    { name: "Slack", icon: appIcons.slack, open: true },
    { name: "Chrome profile", icon: appIcons.chrome, open: true },
    { name: "Discord", icon: appIcons.discord, open: true },
    { name: "Paint", icon: appIcons.paint, open: true },
  ];

  render() {
    return html`
      <button class="slot" aria-label="Start">
        ${icon(32, 32, "0 0 32 32", svg`<path d="M0 4.500 13 2.700V15H0zM14.500 2.400 32 0v15H14.500zM0 16.500h13v12.300L0 27zM14.500 16.500H32V32l-17.500-2.400z" fill="#fff"></path>`)}
      </button>
      <label class="find">
        ${icon(32, 32, "0 0 32 32", svg`<circle cx="21" cy="11" r="9.800" fill="none" stroke="#111" stroke-width="2.200"></circle><path d="M14 18 1 31" stroke="#111" stroke-width="2.400"></path>`)}
        <input type="text" aria-label="Search" placeholder="Type here to search" />
      </label>
      <button class="slot" aria-label="Cortana">
        ${icon(32, 32, "0 0 32 32", svg`<circle cx="16" cy="16" r="14.500" fill="none" stroke="#8d9a9f" stroke-width="3"></circle><circle cx="16" cy="16" r="12.500" fill="none" stroke="#fff" stroke-width="3"></circle>`)}
      </button>
      <button class="slot" aria-label="Task view">
        ${icon(32, 32, "0 0 32 32", svg`
          <path d="M1 1v5h20V1M3 9h18v13H3zM1 31v-5h20v5M29 1v5M29 17v14" fill="none" stroke="#fff" stroke-width="2"></path>
          <circle cx="29" cy="12" r="3" fill="#fff"></circle>`)}
      </button>
      <div class="apps">
        ${this.apps.map((a) => html`
          <button class=${classMap({ app: true, front: !!a.front })} aria-label=${a.name}>
            <span class="pic">${a.icon()}</span>
            ${a.open ? html`<span class="line"></span>` : nothing}
          </button>`)}
      </div>
      <div class="tray">
        <div class="tray">${Object.values(tray).map((g) => html`<span class="note">${g()}</span>`)}</div>
        <div class="clock"><div>12:43 AM</div><div>4/26/2021</div></div>
        <button class="alerts" aria-label="Notifications">
          ${icon(34, 32, "0 0 34 32", svg`<path d="M0 0h34v26H20l-6 6v-6H0z" fill="#fff"></path><path d="M6 7h22M6 13h22M6 19h14" stroke="#1b2a41" stroke-width="2"></path>`)}
          <span class="count">7</span>
        </button>
        <span class="peek"></span>
      </div>`;
  }
}

@customElement("app-root")
class AppRoot extends LitElement {
  static styles = css`
    :host { display: flex; flex-direction: column; min-height: 100vh; background: #fff; font-family: "Open Sans", "Noto Sans", sans-serif; }
    .page { flex: 1; }
  `;

  render() {
    return html`<browser-chrome></browser-chrome><weather-page class="page"></weather-page><task-bar></task-bar>`;
  }
}
